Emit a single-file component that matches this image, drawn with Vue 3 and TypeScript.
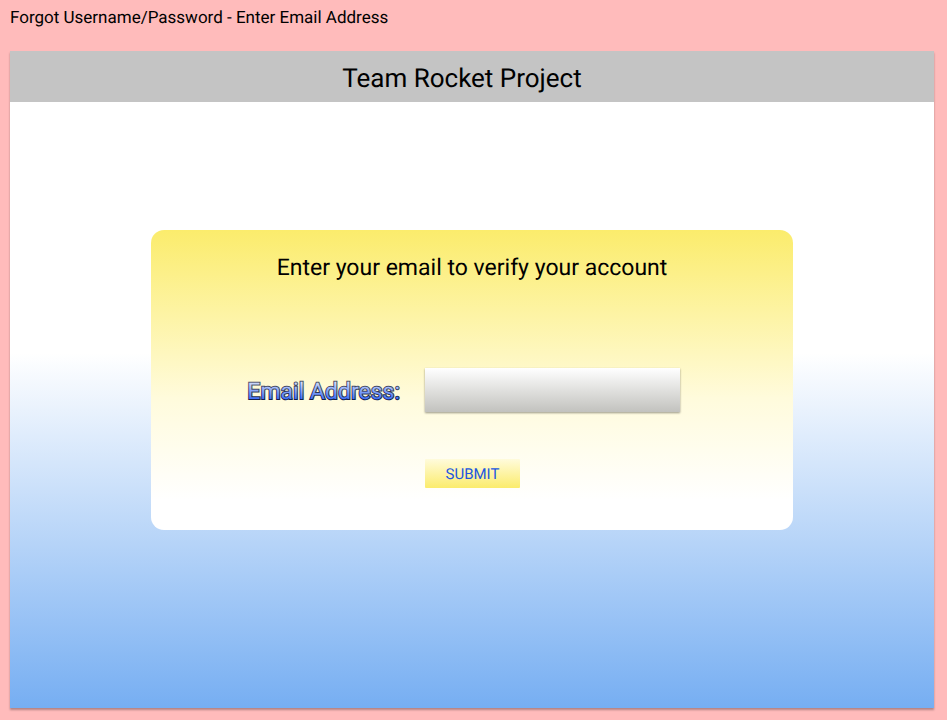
<script setup lang="ts">
import { ref } from 'vue'

const email = ref<string>('')
</script>

<template>
  <div class="page">
    <p class="caption">Forgot Username/Password - Enter Email Address</p>
    <main class="window">
      <header class="bar">
        <h1 class="title">Team Rocket Project</h1>
      </header>
      <section class="content">
        <form class="card" @submit.prevent>
          <h2 class="heading">Enter your email to verify your account</h2>
          <div class="fields">
            <label class="label" for="email">
              <svg class="outlined" width="156" height="32">
                <defs>
                  <linearGradient id="label-fill" x1="0" y1="0" x2="0" y2="1">
                    <stop offset="0.1" stop-color="#dfe7fb" />
                    <stop offset="0.8" stop-color="#3a6cf6" />
                  </linearGradient>
                  <linearGradient id="label-outline" x1="0" y1="0" x2="0" y2="1">
                    <stop offset="0.2" stop-color="#4c5164" />
                    <stop offset="0.8" stop-color="#141f4a" />
                  </linearGradient>
                </defs>
                <text
                  class="outlined-text"
                  x="156"
                  y="25"
                  text-anchor="end"
                  fill="url(#label-fill)"
                  stroke="url(#label-outline)"
                >Email Address:</text>
              </svg>
            </label>
            <input id="email" v-model="email" class="input" type="email" />
            <button class="submit" type="submit">SUBMIT</button>
          </div>
        </form>
      </section>
    </main>
  </div>
</template>

<style>
body {
  margin: 0;
  background: #ffbbbb;
}
</style>

<style scoped>
.page {
  box-sizing: border-box;
  display: flex;
  flex-direction: column;
  min-height: 100vh;
  padding: 8px 13px 12px 10px;
  background: #ffbbbb;
  color: #000;
  font-family: Roboto, 'Liberation Sans', sans-serif;
  text-rendering: geometricPrecision;
}

.caption {
  margin: 0 0 23px;
  font-size: 17px;
  line-height: 20px;
}

.window {
  display: flex;
  flex: 1;
  flex-direction: column;
  background: linear-gradient(180deg, #fff 46%, #76aef2 100%);
  box-shadow: 0 2px 2px rgba(0, 0, 0, 0.3);
}

.bar {
  box-sizing: border-box;
  min-height: 51px;
  padding: 12px 20px 7px 0;
  background: #c4c4c4;
  text-align: center;
}

.title {
  margin: 0;
  font-size: 26px;
  font-weight: 400;
  line-height: 32px;
}

.content {
  display: flex;
  flex: 1;
  align-items: center;
  justify-content: center;
  padding-bottom: 50px;
}

.card {
  box-sizing: border-box;
  width: 100%;
  max-width: 642px;
  padding: 22px 0 42px;
  border-radius: 13px;
  background: linear-gradient(180deg, #fbec6c 0%, #fffbdc 56%, #fff 90%);
}

.heading {
  margin: 0 0 84px;
  font-size: 23px;
  font-weight: 400;
  line-height: 32px;
  text-align: center;
}

.fields {
  display: grid;
  grid-template-columns: 249fr 368fr;
  align-items: center;
  gap: 47px 25px;
}

.label {
  justify-self: end;
}

.outlined {
  display: block;
  overflow: visible;
}

.outlined-text {
  font-size: 23px;
  stroke-width: 2px;
  paint-order: stroke;
}

.input {
  box-sizing: border-box;
  width: 100%;
  max-width: 255px;
  height: 44px;
  padding: 0 12px;
  border: 0;
  background: linear-gradient(180deg, #fff 0%, #c2c2be 100%);
  box-shadow: 0 1px 2px rgba(0, 0, 0, 0.4);
  font: inherit;
  font-size: 17px;
}

.submit {
  grid-column: 2;
  justify-self: start;
  width: 95px;
  height: 29px;
  padding: 0;
  border: 0;
  border-radius: 1px;
  background: linear-gradient(180deg, #fffbdc 0%, #fbec6c 100%);
  color: #2156e0;
  font-family: inherit;
  font-size: 15px;
  text-rendering: inherit;
  cursor: pointer;
}
</style>
